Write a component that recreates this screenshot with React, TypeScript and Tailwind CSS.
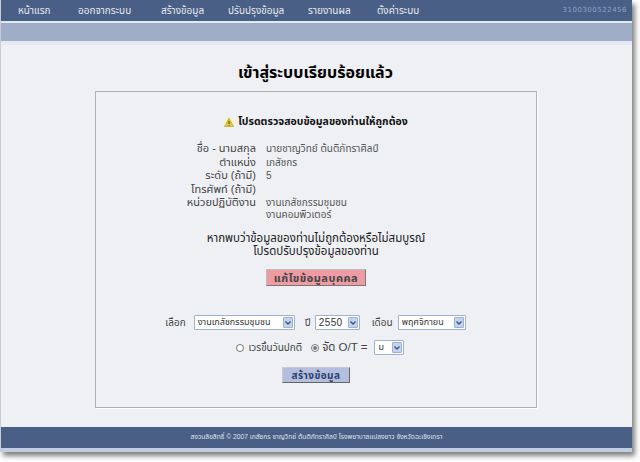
export default function App() {
  const nav = [
    ["หน้าแรก", "w-[60px]"],
    ["ออกจากระบบ", "w-[83px]"],
    ["สร้างข้อมูล", "w-[67px]"],
    ["ปรับปรุงข้อมูล", "w-[80px]"],
    ["รายงานผล", "w-[69px]"],
    ["ตั้งค่าระบบ", "w-[70px]"],
  ];
  const rows = [
    ["ชื่อ - นามสกุล", ["นายชาญวิทย์ ต้นติภัทราศิลป์"]],
    ["ตำแหน่ง", ["เภสัชกร"]],
    ["ระดับ (ถ้ามี)", ["5"]],
    ["โทรศัพท์ (ถ้ามี)", []],
    ["หน่วยปฏิบัติงาน", ["งานเภสัชกรรมชุมชน", "งานคอมพิวเตอร์"]],
  ] as [string, string[]][];
  const sel = "h-[15px] border border-[#9db3d0] bg-white text-[#333] text-[9px] leading-none rounded-[1px] flex items-center justify-between pl-[3px] pr-[1px]";
  const arrow = (
    <span className="w-[10px] h-[11px] bg-[#c3d3ee] border border-[#9db3d0] rounded-[1px] flex items-center justify-center">
      <svg width="6" height="4" viewBox="0 0 6 4"><path d="M0.5 0.5 L3 3 L5.5 0.5" fill="none" stroke="#3a4f80" strokeWidth="1.3" /></svg>
    </span>
  );
  return (
    <div className="w-[640px] h-[462px] bg-white overflow-hidden font-['Liberation_Sans','Noto_Sans_Thai','Noto_Sans',sans-serif]">
      <div className="w-[632px] h-[452px] flex flex-col bg-[#eef0f4] shadow-[3px_4px_5px_rgba(60,60,60,0.65)] border-l border-[#c9ccd2]">
        <div className="h-[21px] bg-[#4a5f85] flex items-center pl-[17px] pr-[5px] text-[10px] text-[#e6ebf3] shrink-0">
          {nav.map(([t, w]) => (
            <span key={t} className={`${w} whitespace-nowrap`}>{t}</span>
          ))}
          <span className="ml-auto text-[7px] tracking-[0.5px] text-[#8aa5cc] font-['DejaVu_Sans',sans-serif]">3100300522456</span>
        </div>
        <div className="h-[2px] bg-[#dfeaf2] shrink-0" />
        <div className="h-[18px] bg-[#9fadc7] shrink-0" />
        <div className="h-[4px] bg-[#e4e9f3] shrink-0" />
        <div className="flex-1 flex flex-col items-center">
          <h1 className="mt-[15px] h-[26px] text-[16px] leading-[26px] font-bold text-black ml-[-2px] whitespace-nowrap">เข้าสู่ระบบเรียบร้อยแล้ว</h1>
          <div className="w-[442px] h-[317px] ml-[-1px] mt-[5px] border border-[#b0b0b0] shadow-[1px_1px_1px_rgba(255,255,255,0.9)] flex flex-col items-center">
            <div className="mt-[22px] h-[16px] flex items-center gap-[4px] text-[10.5px] font-bold text-[#111]">
              <svg width="10" height="11" viewBox="0 0 10 11">
                <circle cx="5" cy="6" r="5" fill="#fbf6b0" />
                <path d="M5 1 L9.5 9.5 H0.5 Z" fill="#e8c93e" stroke="#9a8a40" strokeWidth="0.5" />
                <path d="M5 4 V7 M5 8 V8.8" stroke="#333" strokeWidth="1" />
              </svg>
              <span>โปรดตรวจสอบข้อมูลของท่านให้ถูกต้อง</span>
            </div>
            <div className="mt-[12px] w-full flex flex-col text-[11px] text-[#444]">
              {rows.map(([k, v]) => (
                <div key={k} className="flex min-h-[13.5px]">
                  <div className="w-[160px] text-right whitespace-nowrap leading-[13.5px]">{k}</div>
                  <div className="ml-[10px] text-[10px] leading-[12px] pt-[1px] text-[#555]">
                    {v.map((x) => (<div key={x}>{x}</div>))}
                  </div>
                </div>
              ))}
            </div>
            <div className="mt-[11px] text-[11.5px] leading-[13px] text-[#222] text-center">
              <div>หากพบว่าข้อมูลของท่านไม่ถูกต้องหรือไม่สมบูรณ์</div>
              <div>โปรดปรับปรุงข้อมูลของท่าน</div>
            </div>
            <button className="mt-[11px] w-[100px] h-[17px] bg-[#ee9ba3] border border-[#bdbdbd] border-r-[#777] border-b-[#777] text-[11px] font-bold tracking-[0.5px] text-[#444] whitespace-nowrap">แก้ไขข้อมูลบุคคล</button>
            <div className="mt-[29px] flex items-center text-[10px] text-[#444] ml-[-1px]">
              <span>เลือก</span>
              <div className={`${sel} w-[101px] ml-[8px]`}>งานเภสัชกรรมชุมชน{arrow}</div>
              <span className="ml-[10px]">ปี</span>
              <div className={`${sel} w-[45px] ml-[4px] text-[10px] tracking-[0.4px]`}>2550{arrow}</div>
              <span className="ml-[12px]">เดือน</span>
              <div className={`${sel} w-[68px] ml-[5px]`}>พฤศจิกายน{arrow}</div>
            </div>
            <div className="mt-[9px] ml-[8px] flex items-center text-[10px] text-[#444]">
              <span className="w-[8px] h-[8px] rounded-full border border-[#777] bg-white" />
              <span className="ml-[5px]">เวรขึ้นวันปกติ</span>
              <span className="ml-[9px] w-[8px] h-[8px] rounded-full border border-[#777] bg-white flex items-center justify-center">
                <span className="w-[4px] h-[4px] rounded-full bg-[#777]" />
              </span>
              <span className="ml-[3px] text-[11.5px]">จัด O/T =</span>
              <div className={`${sel} w-[30px] ml-[7px]`}>ม{arrow}</div>
            </div>
            <button className="mt-[11px] w-[68px] h-[16px] bg-[#b3bfdc] border border-[#c9c9c9] border-r-[#666] border-b-[#666] text-[10px] font-bold tracking-[0.4px] text-[#2c3f70] whitespace-nowrap">สร้างข้อมูล</button>
          </div>
        </div>
        <div className="h-[21px] bg-[#4a5f85] flex items-center justify-center text-[6.7px] text-[#dfe5ef] shrink-0">
          สงวนลิขสิทธิ์ © 2007 เภสัชกร ชาญวิทย์ ต้นติภัทราศิลป์ โรงพยาบาลแปลงยาว จังหวัดฉะเชิงเทรา
        </div>
        <div className="h-[4px] bg-[#c3cde2] shrink-0" />
      </div>
    </div>
  );
}
